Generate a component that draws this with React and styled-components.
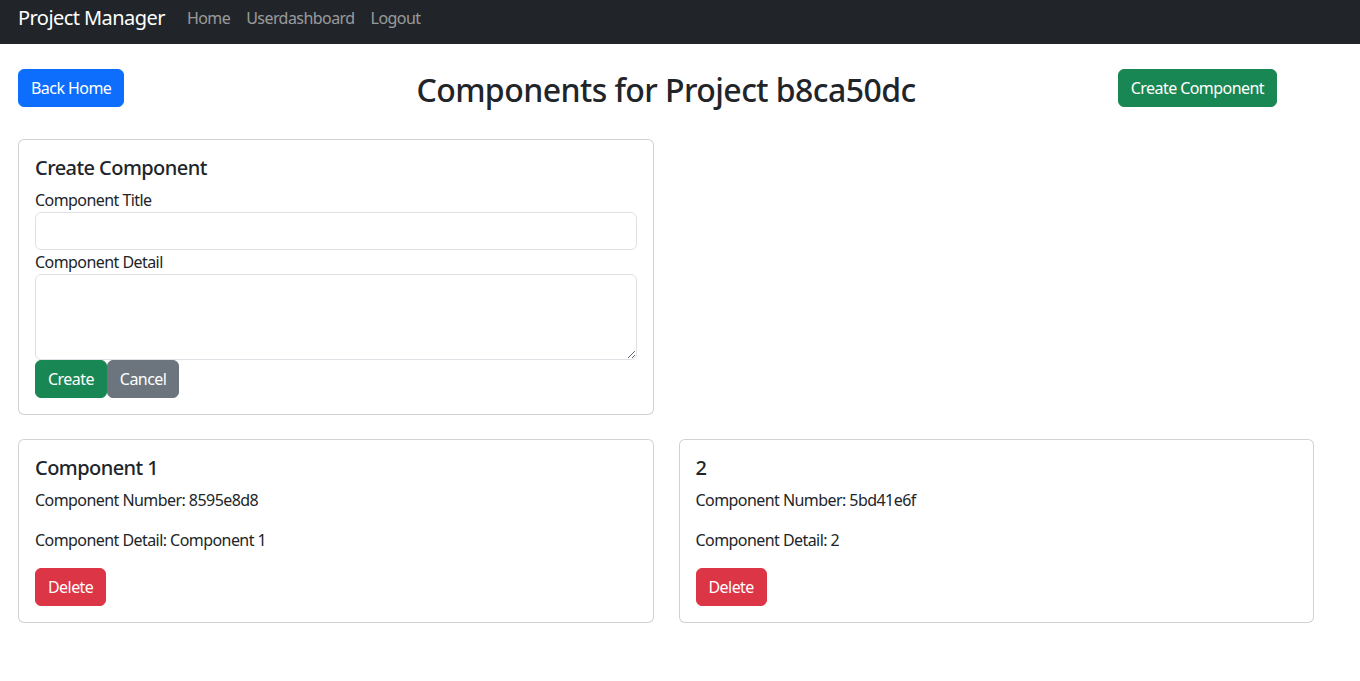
import React from "react";
import styled, { createGlobalStyle } from "styled-components";

const Global = createGlobalStyle`
  * { box-sizing: border-box; }
  body {
    margin: 0;
    font-family: "Noto Sans", "Open Sans", sans-serif;
    font-size: 16px;
    line-height: 1.5;
    letter-spacing: -0.035em;
    color: #212529;
    background: #fff;
  }
`;

const Navbar = styled.nav`
  height: 44px;
  background: #212529;
  display: flex;
  align-items: flex-start;
  padding: 0 18px;
`;

const Brand = styled.a`
  font-size: 20px;
  line-height: 36px;
  color: #fff;
  margin-right: 14px;
  text-decoration: none;
`;

const NavLink = styled.a`
  font-size: 16px;
  line-height: 36px;
  padding: 0 8px;
  color: rgba(255, 255, 255, 0.55);
  text-decoration: none;
`;

const Main = styled.main`
  padding: 25px 18px;
`;

const Header = styled.div`
  display: flex;
  align-items: flex-start;
  margin-right: 65px;
  margin-bottom: 30px;
`;

const Title = styled.h2`
  flex: 1;
  margin: 0;
  padding: 2px 0 0 90px;
  text-align: center;
  font-size: 32px;
  font-weight: 500;
  line-height: 38px;
`;

const colors = {
  primary: "#0d6efd",
  success: "#198754",
  secondary: "#6c757d",
  danger: "#dc3545",
};

const Button = styled.button`
  font-family: inherit;
  font-size: 16px;
  line-height: 24px;
  letter-spacing: inherit;
  padding: 6px 12px;
  border: 1px solid ${(p) => colors[p.$variant]};
  background: ${(p) => colors[p.$variant]};
  color: #fff;
  border-radius: 6px;
  cursor: pointer;
  white-space: nowrap;
`;

const Grid = styled.div`
  display: grid;
  grid-template-columns: repeat(2, 1fr);
  column-gap: 25px;
  row-gap: 24px;
  max-width: 1296px;
`;

const Card = styled.div`
  border: 1px solid rgba(0, 0, 0, 0.175);
  border-radius: 6px;
  padding: 16px;
  background: #fff;
`;

const CardTitle = styled.h5`
  margin: 0 0 8px;
  font-size: 20px;
  font-weight: 500;
  line-height: 24px;
`;

const Label = styled.label`
  display: block;
  font-size: 16px;
  line-height: 24px;
`;

const Input = styled.input`
  display: block;
  width: 100%;
  height: 38px;
  padding: 6px 12px;
  font-family: inherit;
  font-size: 16px;
  border: 1px solid #dee2e6;
  border-radius: 6px;
  outline: none;
`;

const TextArea = styled.textarea`
  display: block;
  width: 100%;
  height: 86px;
  padding: 6px 12px;
  font-family: inherit;
  font-size: 16px;
  border: 1px solid #dee2e6;
  border-radius: 6px;
  outline: none;
  resize: vertical;
`;

const ButtonRow = styled.div`
  display: flex;
`;

const Text = styled.p`
  margin: 0 0 16px;
  font-size: 16px;
  line-height: 24px;
`;

const components = [
  { title: "Component 1", number: "8595e8d8", detail: "Component 1" },
  { title: "2", number: "5bd41e6f", detail: "2" },
];

export default function App() {
  return (
    <>
      <Global />
      <Navbar>
        <Brand href="#">Project Manager</Brand>
        <NavLink href="#">Home</NavLink>
        <NavLink href="#">Userdashboard</NavLink>
        <NavLink href="#">Logout</NavLink>
      </Navbar>
      <Main>
        <Header>
          <Button $variant="primary">Back Home</Button>
          <Title>Components for Project b8ca50dc</Title>
          <Button $variant="success">Create Component</Button>
        </Header>
        <Grid>
          <Card>
            <CardTitle>Create Component</CardTitle>
            <Label>Component Title</Label>
            <Input type="text" />
            <Label>Component Detail</Label>
            <TextArea />
            <ButtonRow>
              <Button $variant="success">Create</Button>
              <Button $variant="secondary">Cancel</Button>
            </ButtonRow>
          </Card>
          <div />
          {components.map((c) => (
            <Card key={c.number}>
              <CardTitle>{c.title}</CardTitle>
              <Text>Component Number: {c.number}</Text>
              <Text>Component Detail: {c.detail}</Text>
              <Button $variant="danger">Delete</Button>
            </Card>
          ))}
        </Grid>
      </Main>
    </>
  );
}
